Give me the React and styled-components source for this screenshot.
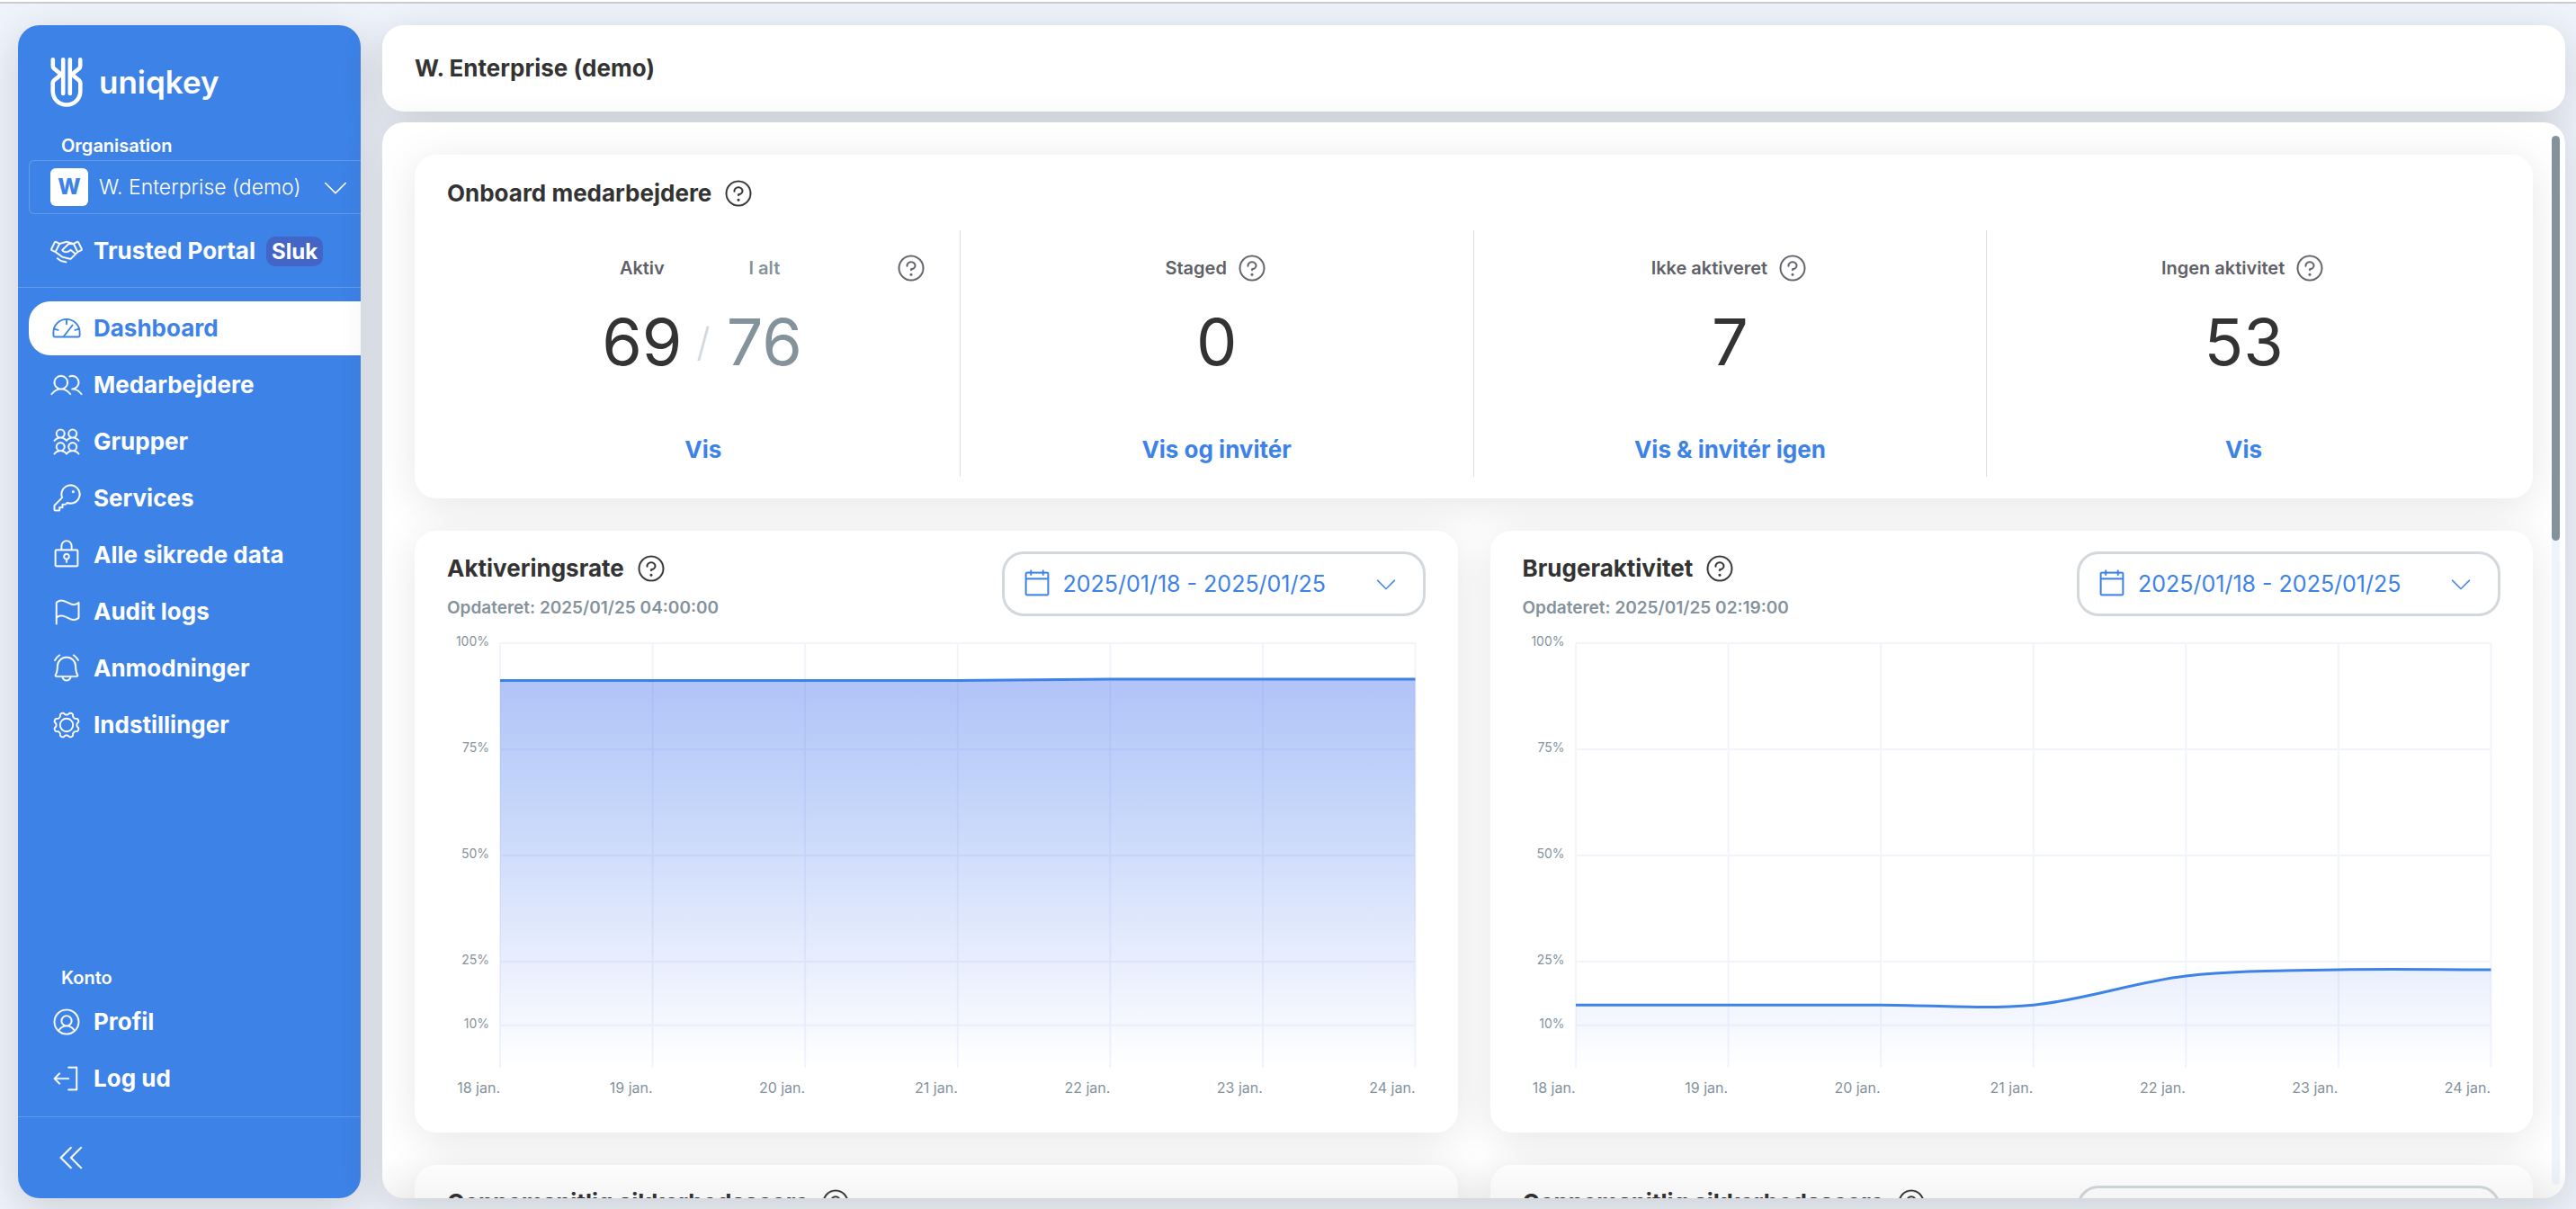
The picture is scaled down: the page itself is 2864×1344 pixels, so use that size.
import React from "react";
import styled, { createGlobalStyle, css } from "styled-components";
import {
  PiBellRingingLight,
  PiCalendarBlankLight,
  PiCaretDoubleLeftLight,
  PiCaretDownLight,
  PiFlagLight,
  PiHandshakeLight,
  PiKeyLight,
  PiLockKeyLight,
  PiQuestionLight,
  PiSignOutLight,
  PiUserCircleLight,
  PiUsersFourLight,
  PiUsersLight,
} from "react-icons/pi";

const color = {
  blue: "#3d82e7",
  text: "#333333",
  label: "#606168",
  muted: "#84929b",
  line: "#d3d8dc",
  grid: "#f2f4fc",
};

const shadow = "0 12px 48px rgba(20, 16, 0, 0.16)";
const cardShadow = "0 8px 48px rgba(0, 0, 0, 0.1)";

const GlobalStyle = createGlobalStyle`
  *, *::before, *::after { box-sizing: border-box; }
  body {
    margin: 0;
    background: #eff3fc;
    color: ${color.text};
    font-family: Inter, "Open Sans", sans-serif;
    font-size: 26px;
  }
  h1, h2, p, ul { margin: 0; padding: 0; }
  button, select { font: inherit; color: inherit; }
  svg { display: block; flex: none; }
`;

/* ---------- Shell ---------- */

const Page = styled.div`
  display: flex;
  flex-direction: column;
  height: 100vh;
  overflow: hidden;
  border-top: 2px solid #ffffff;
`;

const Shell = styled.div`
  flex: 1;
  min-height: 0;
  display: flex;
  gap: 24px;
  padding: 24px 12px 12px 20px;
  border-top: 2px solid #cccdcf;
`;

const Sidebar = styled.aside`
  flex: 0 0 381px;
  display: flex;
  flex-direction: column;
  border-radius: 24px;
  background: ${color.blue};
  color: #ffffff;
  box-shadow: ${shadow};
  overflow: hidden;
`;

const Main = styled.main`
  flex: 1;
  min-width: 0;
  display: flex;
  flex-direction: column;
  gap: 12px;
`;

/* ---------- Sidebar ---------- */

const Logo = styled.a`
  display: flex;
  align-items: center;
  gap: 18px;
  padding: 36px 36px 31px;
  color: inherit;
  text-decoration: none;
  font-size: 35px;
  line-height: 55px;
  font-weight: 600;
`;

const GroupLabel = styled.label`
  padding-left: 48px;
  font-size: 20px;
  line-height: 24px;
  font-weight: 600;
`;

const OrgBox = styled.div`
  display: flex;
  align-items: center;
  height: 60px;
  margin: 4px 0 11px 12px;
  padding: 0 10px 0 23px;
  border: 1px solid rgba(255, 255, 255, 0.2);
  border-right: 0;
  border-radius: 6px 0 0 6px;
`;

const OrgInitial = styled.span`
  width: 42px;
  height: 42px;
  margin-right: 12px;
  border-radius: 6px;
  background: #ffffff;
  color: ${color.blue};
  font-size: 24px;
  font-weight: 800;
  line-height: 42px;
  text-align: center;
`;

const OrgSelect = styled.select`
  flex: 1;
  min-width: 0;
  padding: 0;
  border: 0;
  background: transparent;
  appearance: none;
  font-size: 23px;
  font-weight: 300;
`;

const NavList = styled.ul`
  display: flex;
  flex-direction: column;
  gap: 3px;
  padding-left: 12px;
  list-style: none;
`;

const NavLink = styled.a`
  display: flex;
  align-items: center;
  gap: 12px;
  height: 60px;
  padding-left: 24px;
  border-radius: 24px 0 0 24px;
  color: inherit;
  font-weight: 700;
  line-height: 36px;
  text-decoration: none;
  white-space: nowrap;
  ${({ $active }) =>
    $active &&
    css`
      background: #ffffff;
      color: ${color.blue};
    `}
  & > svg, & > span > svg {
    stroke: currentColor;
    stroke-width: 2px;
  }
`;

const Flipped = styled.span`
  transform: scaleX(-1);
`;

const Badge = styled.span`
  padding: 0 6px;
  border-radius: 10px;
  background: #4365c5;
  font-size: 24px;
  line-height: 33px;
`;

const Rule = styled.hr`
  width: 100%;
  height: 1px;
  margin: ${({ $top }) => $top}px 0 0;
  border: 0;
  background: rgba(255, 255, 255, 0.2);
`;

const MainNav = styled.nav`
  flex: 1;
  padding-top: 15px;
`;

const AccountNav = styled.nav`
  display: flex;
  flex-direction: column;
  gap: 7px;
`;

const CollapseButton = styled.button`
  display: flex;
  align-items: center;
  height: 90px;
  padding: 0 42px;
  border: 0;
  background: transparent;
  & > svg {
    stroke: currentColor;
    stroke-width: 4px;
  }
`;

/* ---------- Header and panel ---------- */

const Header = styled.header`
  flex: none;
  display: flex;
  align-items: center;
  height: 96px;
  padding: 0 36px;
  border-radius: 24px;
  background: #ffffff;
  box-shadow: ${shadow};
`;

const Title = styled.h1`
  font-size: 26px;
  line-height: 36px;
  font-weight: 700;
`;

const Panel = styled.section`
  position: relative;
  flex: 1;
  min-height: 0;
  display: flex;
  border-radius: 24px;
  background: #ffffff;
  box-shadow: ${shadow};
  overflow: hidden;
  &::after {
    content: "";
    position: absolute;
    inset: auto 0 0;
    height: 48px;
    background: linear-gradient(transparent, rgba(0, 0, 0, 0.04));
    pointer-events: none;
  }
`;

const ScrollArea = styled.div`
  flex: 1;
  min-width: 0;
  display: flex;
  flex-direction: column;
  gap: 36px;
  padding: 36px 21px 0 36px;
`;

const ScrollTrack = styled.div`
  flex: 0 0 9px;
  margin: 15px 6px 15px 0;
  border-radius: 5px;
  background: #eff3fc;
`;

const ScrollThumb = styled.div`
  height: 450px;
  border-radius: 5px;
  background: ${color.muted};
`;

const Card = styled.section`
  flex: none;
  border-radius: 24px;
  background: #ffffff;
  box-shadow: ${cardShadow};
`;

const HeadingRow = styled.div`
  display: flex;
  align-items: center;
  gap: 12px;
  height: 38px;
`;

const Heading = styled.h2`
  font-size: 26px;
  line-height: 38px;
  font-weight: 700;
  white-space: nowrap;
`;

const HelpButton = styled.button`
  display: flex;
  padding: 0;
  border: 0;
  background: transparent;
  color: inherit;
  & > svg {
    stroke: currentColor;
    stroke-width: 2px;
  }
`;

/* ---------- Onboarding statistics ---------- */

const StatsCard = styled(Card)`
  padding: 24px 36px;
`;

const StatsGrid = styled.div`
  display: grid;
  grid-template-columns: repeat(4, 1fr);
  margin-top: 22px;
`;

const Stat = styled.div`
  display: flex;
  flex-direction: column;
  height: 274px;
  padding: 24px 0 12px;
  border-right: 1px solid #dedede;
  text-align: center;
  &:last-child { border-right: 0; }
`;

const StatLabel = styled.div`
  display: flex;
  align-items: center;
  justify-content: center;
  gap: 10px;
  height: 36px;
  color: ${color.label};
  font-size: 20px;
  font-weight: 600;
`;

const SplitLabel = styled(StatLabel)`
  display: grid;
  grid-template-columns: 1fr auto 1fr;
  gap: 0;
  & > :last-child {
    justify-self: end;
    margin-right: 36px;
  }
`;

const Pair = styled.div`
  display: grid;
  grid-template-columns: 96px 40px 96px;
  justify-content: center;
  align-items: center;
`;

const Total = styled.span`
  grid-column: 3;
  color: ${color.muted};
`;

const StatValue = styled.div`
  height: 84px;
  margin-top: 22px;
  font-size: 72px;
  line-height: 84px;
`;

const Slash = styled.span`
  color: ${color.line};
  font-size: 44px;
  font-weight: 300;
`;

const StatLink = styled.a`
  margin-top: auto;
  color: ${color.blue};
  font-weight: 700;
  line-height: 36px;
  text-decoration: none;
`;

/* ---------- Charts ---------- */

const CardGrid = styled.div`
  flex: none;
  display: grid;
  grid-template-columns: 1fr 1fr;
  gap: 36px;
`;

const ChartCard = styled(Card)`
  height: 669px;
  padding: 23px 36px;
`;

const ChartHeader = styled.div`
  display: flex;
  justify-content: space-between;
  height: 72px;
  margin-bottom: 30px;
`;

const Updated = styled.p`
  margin-top: 13px;
  color: ${color.muted};
  font-size: 19px;
  line-height: 24px;
  font-weight: 600;
`;

const DateButton = styled.button`
  display: flex;
  align-items: center;
  width: 471px;
  height: 72px;
  padding: 0 26px 0 18px;
  border: 3px solid ${color.line};
  border-radius: 24px;
  background: #ffffff;
  color: ${color.blue};
  font-size: 25px;
  & > span {
    flex: 1;
    margin-left: 11px;
    text-align: left;
  }
  & > svg {
    stroke: currentColor;
    stroke-width: 2px;
  }
`;

const ChartGrid = styled.figure`
  display: grid;
  grid-template-columns: 59px 1fr;
  margin: 0;
  padding-right: 11px;
  color: ${color.muted};
  line-height: 20px;
`;

const YAxis = styled.div`
  display: grid;
  grid-template-rows: 25fr 25fr 25fr 15fr 10fr;
  height: 472px;
  padding-right: 12px;
  font-size: 14px;
  text-align: right;
  & > span { margin-top: -12px; }
`;

const XAxis = styled.div`
  grid-column: 1 / -1;
  display: grid;
  grid-template-columns: 59px repeat(6, 1fr);
  margin-top: 12px;
  font-size: 16px;
  text-align: right;
`;

const Plot = styled.svg`
  width: 100%;
  height: 472px;
  overflow: visible;
`;

const Help = ({ topic }) => (
  <HelpButton type="button" aria-label={`Hjælp: ${topic}`}>
    <PiQuestionLight size={36} />
  </HelpButton>
);

const LogoMark = () => (
  <svg width="36" height="55" viewBox="0 0 36 55" fill="none" stroke="#ffffff" strokeWidth="4.6" strokeLinecap="round" strokeLinejoin="round" aria-hidden="true">
    <path d="M14.2 2.3V40M21.8 2.3V40" />
    <path d="M2.8 2.3v7.2c0 1 .3 1.7 1 2.4L13 19.5M33.2 2.3v7.2c0 1-.3 1.7-1 2.4L23 19.5" />
    <path d="M13 18 4.2 25.3c-1 .9-1.5 1.7-1.5 3V37.2c0 8.6 6.7 15.3 15.3 15.3s15.3-6.7 15.3-15.3V28.3c0-1.3-.5-2.1-1.5-3L23 18" />
  </svg>
);

const GaugeIcon = () => (
  <svg width="36" height="36" viewBox="0 0 36 36" aria-hidden="true">
    <g fill="none" strokeWidth="1.9" strokeLinecap="round" strokeLinejoin="round">
      <path d="M3.4 22.5a14.6 14.6 0 0 1 29.2 0V26a1.5 1.5 0 0 1-1.5 1.5H4.9A1.5 1.5 0 0 1 3.4 26Z" />
      <path d="M18 8v5.2M4 18.7l4.6 1.2M32 18.7l-4.6 1.2M15.2 26.5l9.4-12" />
    </g>
  </svg>
);

/* Outline of an eight-lobed cog around (18, 18). */
const cogPath =
  Array.from({ length: 128 }, (_, i) => {
    const a = (i / 128) * Math.PI * 2;
    const r = 12.8 + 1.4 * Math.tanh(-1.8 * Math.cos(8 * a));
    return `${i ? "L" : "M"}${(18 + r * Math.sin(a)).toFixed(2)} ${(18 - r * Math.cos(a)).toFixed(2)}`;
  }).join("") + "Z";

const CogIcon = () => (
  <svg width="36" height="36" viewBox="0 0 36 36" aria-hidden="true">
    <g fill="none" strokeWidth="1.9" strokeLinejoin="round">
      <path d={cogPath} />
      <circle cx="18" cy="18" r="7.2" />
    </g>
  </svg>
);

/* Cardinal spline through evenly spaced points, values in percent. */
function linePath(values) {
  const step = 600 / (values.length - 1);
  const points = values.map((v, i) => [i * step, 100 - v]);
  const tension = 0.16;
  return points.reduce((path, [x, y], i) => {
    if (i === 0) return `M${x},${y}`;
    const before = points[Math.max(i - 2, 0)];
    const from = points[i - 1];
    const after = points[Math.min(i + 1, points.length - 1)];
    const c1 = [from[0] + step * 0.33, from[1] + (y - before[1]) * tension];
    const c2 = [x - step * 0.33, y - (after[1] - from[1]) * tension];
    return `${path} C${c1.join(",")} ${c2.join(",")} ${x},${y}`;
  }, "");
}

const days = [18, 19, 20, 21, 22, 23, 24];
const ticks = [100, 75, 50, 25, 10];

function AreaChart({ id, title, values }) {
  const line = linePath(values);
  return (
    <ChartGrid aria-label={title}>
      <YAxis>
        {ticks.map((t) => (
          <span key={t}>{t}%</span>
        ))}
      </YAxis>
      <Plot viewBox="0 0 600 100" preserveAspectRatio="none" aria-hidden="true">
        <defs>
          <linearGradient id={id} gradientUnits="userSpaceOnUse" x1="0" y1="0" x2="0" y2="100">
            <stop offset="0" stopColor="#456eee" stopOpacity="0.45" />
            <stop offset="0.4" stopColor="#3c74ee" stopOpacity="0.29" />
            <stop offset="1" stopColor="#456eee" stopOpacity="0" />
          </linearGradient>
        </defs>
        <g stroke={color.grid} strokeWidth="2">
          {ticks.map((t) => (
            <path key={t} d={`M0,${100 - t}H600`} vectorEffect="non-scaling-stroke" />
          ))}
          {days.map((d, i) => (
            <path key={d} d={`M${i * 100},0V100`} vectorEffect="non-scaling-stroke" />
          ))}
        </g>
        <path d={`${line} V100 H0 Z`} fill={`url(#${id})`} />
        <path d={line} fill="none" stroke={color.blue} strokeWidth="3" vectorEffect="non-scaling-stroke" />
      </Plot>
      <XAxis>
        {days.map((d) => (
          <span key={d}>{d} jan.</span>
        ))}
      </XAxis>
    </ChartGrid>
  );
}

function ChartPanel({ id, title, updated, values, range }) {
  return (
    <ChartCard>
      <ChartHeader>
        <div>
          <HeadingRow>
            <Heading>{title}</Heading>
            <Help topic={title} />
          </HeadingRow>
          {updated && <Updated>Opdateret: {updated}</Updated>}
        </div>
        {range && (
          <DateButton type="button" aria-haspopup="dialog">
            <PiCalendarBlankLight size={36} />
            <span>{range}</span>
            <PiCaretDownLight size={30} />
          </DateButton>
        )}
      </ChartHeader>
      {values && <AreaChart id={id} title={title} values={values} />}
    </ChartCard>
  );
}

const menu = [
  ["Dashboard", GaugeIcon],
  ["Medarbejdere", PiUsersLight],
  ["Grupper", PiUsersFourLight],
  ["Services", PiKeyLight],
  ["Alle sikrede data", PiLockKeyLight],
  ["Audit logs", PiFlagLight],
  ["Anmodninger", PiBellRingingLight],
  ["Indstillinger", CogIcon],
];

const stats = [
  { label: "Staged", value: 0, link: "Vis og invitér" },
  { label: "Ikke aktiveret", value: 7, link: "Vis & invitér igen" },
  { label: "Ingen aktivitet", value: 53, link: "Vis" },
];

const range = "2025/01/18 - 2025/01/25";

export default function App() {
  return (
    <>
      <GlobalStyle />
      <Page>
        <Shell>
          <Sidebar>
            <Logo href="#">
              <LogoMark />
              uniqkey
            </Logo>
            <GroupLabel htmlFor="organisation">Organisation</GroupLabel>
            <OrgBox>
              <OrgInitial aria-hidden="true">W</OrgInitial>
              <OrgSelect id="organisation" defaultValue="demo">
                <option value="demo">W. Enterprise (demo)</option>
              </OrgSelect>
              <PiCaretDownLight size={36} />
            </OrgBox>
            <NavList>
              <li>
                <NavLink href="#">
                  <PiHandshakeLight size={36} />
                  Trusted Portal
                  <Badge>Sluk</Badge>
                </NavLink>
              </li>
            </NavList>
            <Rule $top={10} />
            <MainNav>
              <NavList>
                {menu.map(([name, Icon], i) => (
                  <li key={name}>
                    <NavLink href="#" $active={i === 0}>
                      <Icon size={36} />
                      {name}
                    </NavLink>
                  </li>
                ))}
              </NavList>
            </MainNav>
            <AccountNav>
              <GroupLabel as="span">Konto</GroupLabel>
              <NavList>
                <li>
                  <NavLink href="#">
                    <PiUserCircleLight size={36} />
                    Profil
                  </NavLink>
                </li>
                <li>
                  <NavLink href="#">
                    <Flipped>
                      <PiSignOutLight size={36} />
                    </Flipped>
                    Log ud
                  </NavLink>
                </li>
              </NavList>
            </AccountNav>
            <Rule $top={12} />
            <CollapseButton type="button" aria-label="Skjul menu">
              <PiCaretDoubleLeftLight size={36} />
            </CollapseButton>
          </Sidebar>

          <Main>
            <Header>
              <Title>W. Enterprise (demo)</Title>
            </Header>
            <Panel>
              <ScrollArea>
                <StatsCard>
                  <HeadingRow>
                    <Heading>Onboard medarbejdere</Heading>
                    <Help topic="Onboard medarbejdere" />
                  </HeadingRow>
                  <StatsGrid>
                    <Stat>
                      <SplitLabel>
                        <span />
                        <Pair>
                          <span>Aktiv</span>
                          <Total>I alt</Total>
                        </Pair>
                        <Help topic="Aktiv" />
                      </SplitLabel>
                      <StatValue>
                        <Pair>
                          <span>69</span>
                          <Slash>/</Slash>
                          <Total>76</Total>
                        </Pair>
                      </StatValue>
                      <StatLink href="#">Vis</StatLink>
                    </Stat>
                    {stats.map((s) => (
                      <Stat key={s.label}>
                        <StatLabel>
                          {s.label}
                          <Help topic={s.label} />
                        </StatLabel>
                        <StatValue>{s.value}</StatValue>
                        <StatLink href="#">{s.link}</StatLink>
                      </Stat>
                    ))}
                  </StatsGrid>
                </StatsCard>
                <CardGrid>
                  <ChartPanel
                    id="activation"
                    title="Aktiveringsrate"
                    updated="2025/01/25 04:00:00"
                    values={[91.2, 91.2, 91.2, 91.2, 91.5, 91.5, 91.5]}
                    range={range}
                  />
                  <ChartPanel
                    id="activity"
                    title="Brugeraktivitet"
                    updated="2025/01/25 02:19:00"
                    values={[14.8, 14.8, 14.8, 14.8, 21.6, 23.1, 23.1]}
                    range={range}
                  />
                </CardGrid>
                <CardGrid>
                  <ChartPanel title="Gennemsnitlig sikkerhedsscore" />
                  <ChartPanel title="Gennemsnitlig sikkerhedsscore" range={range} />
                </CardGrid>
              </ScrollArea>
              <ScrollTrack>
                <ScrollThumb />
              </ScrollTrack>
            </Panel>
          </Main>
        </Shell>
      </Page>
    </>
  );
}
